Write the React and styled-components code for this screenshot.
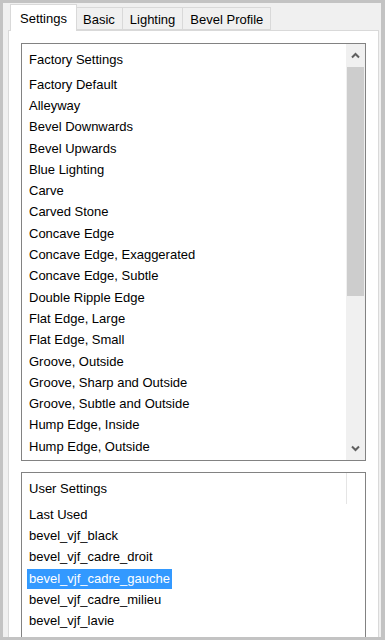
import React from "react";
import styled, { createGlobalStyle } from "styled-components";

const GlobalStyle = createGlobalStyle`
  html, body {
    margin: 0;
    padding: 0;
    background: #c3c3c3;
  }
  body {
    font-family: "Liberation Sans", Arial, sans-serif;
    font-size: 13px;
    color: #000;
  }
`;

const factoryItems = [
  "Factory Default",
  "Alleyway",
  "Bevel Downwards",
  "Bevel Upwards",
  "Blue Lighting",
  "Carve",
  "Carved Stone",
  "Concave Edge",
  "Concave Edge, Exaggerated",
  "Concave Edge, Subtle",
  "Double Ripple Edge",
  "Flat Edge, Large",
  "Flat Edge, Small",
  "Groove, Outside",
  "Groove, Sharp and Outside",
  "Groove, Subtle and Outside",
  "Hump Edge, Inside",
  "Hump Edge, Outside",
];

const userItems = [
  "Last Used",
  "bevel_vjf_black",
  "bevel_vjf_cadre_droit",
  "bevel_vjf_cadre_gauche",
  "bevel_vjf_cadre_milieu",
  "bevel_vjf_lavie",
];

const tabs = ["Settings", "Basic", "Lighting", "Bevel Profile"];

// Styled components
const Frame = styled.div`
  box-sizing: border-box;
  width: 385px;
  height: 640px;
  border: 3px solid #c3c3c3;
  border-right-width: 4px;
  background: #f0f0f0;
  padding: 1px 2px 0 5px;
  overflow: hidden;
  display: flex;
  flex-direction: column;
`;

const TabStrip = styled.div`
  display: flex;
  align-items: flex-end;
  height: 26px;
  padding-left: 2px;
  position: relative;
  z-index: 1;
`;

const Tab = styled.div`
  box-sizing: border-box;
  height: ${(p) => (p.$active ? "27px" : "23px")};
  padding: 0 ${(p) => (p.$active ? "9px" : "7px")};
  margin: 0 ${(p) => (p.$active ? "-1px" : "0")} ${(p) => (p.$active ? "-1px" : "0")} ${(p) => (p.$active ? "-2px" : "-1px")};
  background: ${(p) => (p.$active ? "#fff" : "#f0f0f0")};
  border: 1px solid #d9d9d9;
  border-bottom: ${(p) => (p.$active ? "none" : "1px solid #d9d9d9")};
  display: flex;
  align-items: center;
  line-height: 1;
  padding-top: ${(p) => (p.$active ? "0" : "1px")};
  position: relative;
  z-index: ${(p) => (p.$active ? 2 : 1)};
  &:first-child {
    margin-left: 0;
  }
`;

const Panel = styled.div`
  flex: 1;
  background: #fff;
  border: 1px solid #d9d9d9;
  border-bottom: none;
  padding: 12px 12px 0 12px;
  display: flex;
  flex-direction: column;
  gap: 11px;
`;

const ListBox = styled.div`
  box-sizing: border-box;
  height: ${(p) => p.$height};
  flex-shrink: 0;
  border: 1px solid #828282;
  border-bottom-width: ${(p) => (p.$open ? "0" : "1px")};
  display: flex;
  position: relative;
  background: #fff;
`;

const ListBody = styled.div`
  flex: 1;
  display: flex;
  flex-direction: column;
`;

const Header = styled.div`
  height: ${(p) => p.$h};
  display: flex;
  align-items: center;
  padding-left: 7px;
  box-sizing: border-box;
`;

const HeaderDivider = styled.div`
  position: absolute;
  top: 0;
  right: 18px;
  width: 1px;
  height: 31px;
  background: #e5e5e5;
`;

const Item = styled.div`
  height: 21.3px;
  display: flex;
  align-items: center;
  padding-left: 5px;
`;

const ItemText = styled.span`
  padding: 2px 2px 3px;
  line-height: 15px;
  background: ${(p) => (p.$selected ? "#3399ff" : "transparent")};
  color: ${(p) => (p.$selected ? "#fff" : "#000")};
`;

const ScrollBar = styled.div`
  width: 19px;
  background: #f0f0f0;
  display: flex;
  flex-direction: column;
  align-items: center;
`;

const ArrowButton = styled.div`
  height: 23px;
  width: 100%;
  display: flex;
  align-items: center;
  justify-content: center;
`;

const Track = styled.div`
  flex: 1;
  width: 100%;
  display: flex;
  flex-direction: column;
  align-items: center;
`;

const Thumb = styled.div`
  width: 17px;
  height: 229px;
  background: #cdcdcd;
`;

const Chevron = ({ up }) => (
  <svg width="9" height="7" viewBox="0 0 9 7">
    <polyline
      points={up ? "1,5.5 4.5,2 8,5.5" : "1,1.5 4.5,5 8,1.5"}
      fill="none"
      stroke="#606060"
      strokeWidth="2"
    />
  </svg>
);

const App = () => {
  return (
    <>
      <GlobalStyle />
      <Frame>
        <TabStrip>
          {tabs.map((t, i) => (
            <Tab key={t} $active={i === 0}>
              {t}
            </Tab>
          ))}
        </TabStrip>
        <Panel>
          <ListBox $height="418px">
            <ListBody>
              <Header $h="30px">Factory Settings</Header>
              {factoryItems.map((it) => (
                <Item key={it}>
                  <ItemText>{it}</ItemText>
                </Item>
              ))}
            </ListBody>
            <ScrollBar>
              <ArrowButton>
                <Chevron up />
              </ArrowButton>
              <Track>
                <Thumb />
              </Track>
              <ArrowButton>
                <Chevron />
              </ArrowButton>
            </ScrollBar>
          </ListBox>
          <ListBox $height="200px" $open>
            <ListBody>
              <Header $h="31px">User Settings</Header>
              {userItems.map((it, i) => (
                <Item key={it}>
                  <ItemText $selected={i === 3}>{it}</ItemText>
                </Item>
              ))}
            </ListBody>
            <HeaderDivider />
          </ListBox>
        </Panel>
      </Frame>
    </>
  );
};

export default App;
